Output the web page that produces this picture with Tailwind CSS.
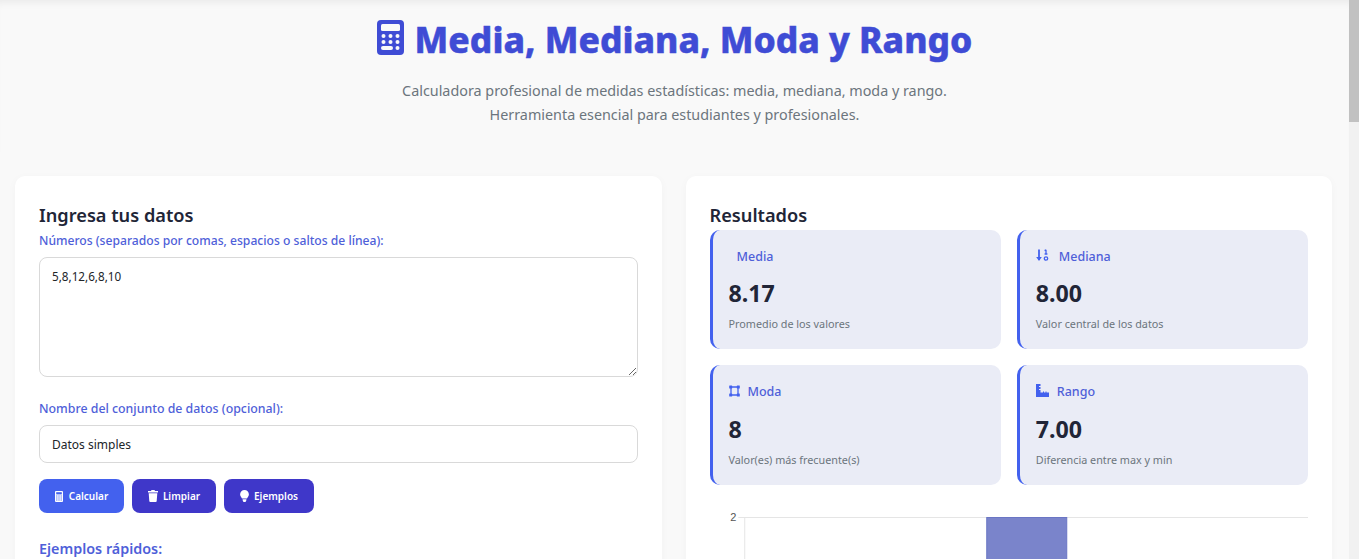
<!DOCTYPE html>
<html lang="es">
<head>
  <meta charset="UTF-8">
  <title>Media, Mediana, Moda y Rango</title>
  <script src="https://cdn.jsdelivr.net/npm/@tailwindcss/browser@4"></script>
</head>
<body class="h-screen overflow-hidden flex bg-[#f9f9f9] font-['Noto_Sans',sans-serif] text-[#212537]">
  <div class="flex-1 min-w-0 overflow-hidden">
    <header class="h-[152px] flex flex-col items-center shadow-[inset_0_8px_8px_-6px_rgba(0,0,0,0.07)]">
      <h1 class="mt-[14px] h-[50px] flex items-center gap-[11px] text-[35.4px] leading-[50px] font-extrabold text-[#3f4cd5] [-webkit-text-stroke:0.5px_#3f4cd5]">
        <svg class="w-[27px] h-[35px] -mt-[4px]" viewBox="0 0 27 35">
          <rect width="27" height="35" rx="4" fill="#3f4cd5"/>
          <rect x="4" y="4" width="19" height="7" rx="1.5" fill="#f9f9f9"/>
          <g fill="#f9f9f9">
            <circle cx="6.5" cy="16" r="2"/><circle cx="13.5" cy="16" r="2"/><circle cx="20.5" cy="16" r="2"/>
            <circle cx="6.5" cy="22" r="2"/><circle cx="13.5" cy="22" r="2"/><circle cx="20.5" cy="22" r="2"/>
            <rect x="4" y="26" width="12" height="4" rx="2"/><circle cx="20.5" cy="28" r="2"/>
          </g>
        </svg>
        Media, Mediana, Moda y Rango
      </h1>
      <p class="mt-[14.5px] text-[14.35px] leading-[24.5px] text-[#6c757d] text-center">Calculadora profesional de medidas estadísticas: media, mediana, moda y rango.<br>Herramienta esencial para estudiantes y profesionales.</p>
    </header>

    <main class="mt-[24px] mx-[15px] mr-[17px] grid grid-cols-2 gap-[24px] items-start">
      <section class="h-[500px] bg-white rounded-[10px] p-[24px] shadow-[0_2px_10px_rgba(0,0,0,0.03)]">
        <h2 class="mt-[2px] text-[18.2px] leading-[26px] font-semibold">Ingresa tus datos</h2>
        <label class="block mt-[4px] text-[12.13px] leading-[18px] font-medium text-[#4f5fd9]">Números (separados por comas, espacios o saltos de línea):</label>
        <textarea class="block mt-[7px] w-full h-[120px] border border-[#d9d9d9] rounded-[8px] px-[12px] py-[9px] text-[11.7px] leading-[18px] text-[#212529] bg-white">5,8,12,6,8,10</textarea>
        <label class="block mt-[23px] text-[12.35px] leading-[18px] font-medium text-[#4f5fd9]">Nombre del conjunto de datos (opcional):</label>
        <input class="block mt-[7px] w-full h-[38px] border border-[#d9d9d9] rounded-[8px] px-[12px] text-[12px] text-[#212529] bg-white" value="Datos simples">
        <div class="mt-[16px] flex gap-[8px]">
          <button class="h-[34px] w-[85px] rounded-[8px] bg-[#4361ee] text-white text-[10px] font-semibold flex items-center justify-center gap-[6px]">
            <svg class="w-[8px] h-[11px]" viewBox="0 0 8 11"><rect width="8" height="11" rx="1" fill="#fff"/><rect x="1.2" y="1.2" width="5.6" height="2.2" fill="#4361ee"/><g fill="#4361ee"><rect x="1.2" y="4.5" width="1.2" height="1"/><rect x="3.4" y="4.5" width="1.2" height="1"/><rect x="5.6" y="4.5" width="1.2" height="1"/><rect x="1.2" y="6.5" width="1.2" height="1"/><rect x="3.4" y="6.5" width="1.2" height="1"/><rect x="5.6" y="6.5" width="1.2" height="1"/><rect x="1.2" y="8.5" width="1.2" height="1"/><rect x="3.4" y="8.5" width="1.2" height="1"/><rect x="5.6" y="8.5" width="1.2" height="1"/></g></svg>
            Calcular
          </button>
          <button class="h-[34px] w-[84px] rounded-[8px] bg-[#3f37c9] text-white text-[10px] font-semibold flex items-center justify-center gap-[5px]">
            <svg class="w-[10px] h-[12px]" viewBox="0 0 10 12"><path fill="#fff" d="M3.5 0h3l.5 1h3v1.4H0V1h3zM.7 3.2h8.6L8.7 11a1 1 0 0 1-1 1H2.3a1 1 0 0 1-1-1z"/></svg>
            Limpiar
          </button>
          <button class="h-[34px] w-[90px] rounded-[8px] bg-[#3f37c9] text-white text-[10px] font-semibold flex items-center justify-center gap-[5px]">
            <svg class="w-[9px] h-[12px]" viewBox="0 0 9 12"><path fill="#fff" d="M4.5 0a4.4 4.4 0 0 1 4.4 4.4c0 1.6-1.2 2.6-1.9 4H2c-.7-1.4-1.9-2.4-1.9-4A4.4 4.4 0 0 1 4.5 0zM2.6 9.2h3.8v1L5.5 12h-2l-.9-1.8z"/></svg>
            Ejemplos
          </button>
        </div>
        <h3 class="mt-[26px] text-[14.35px] leading-[20px] font-semibold text-[#4f5fd9]">Ejemplos rápidos:</h3>
      </section>

      <section class="h-[500px] bg-white rounded-[10px] p-[24px] shadow-[0_2px_10px_rgba(0,0,0,0.03)]">
        <h2 class="mt-[2px] text-[18.2px] leading-[26px] font-semibold">Resultados</h2>
        <div class="mt-[2px] grid grid-cols-2 gap-[16px]">
          <div class="h-[119px] rounded-[10px] border-l-[3px] border-[#4361ee] bg-[#eaecf6] pl-[16px] pt-[17px]">
            <div class="pl-[8px] text-[12.5px] leading-[20px] font-medium text-[#4f5fd9]">Media</div>
            <div class="mt-[10px] text-[23.2px] leading-[32px] font-bold">8.17</div>
            <div class="mt-[7px] text-[10.8px] leading-[16px] text-[#6c757d]">Promedio de los valores</div>
          </div>
          <div class="h-[119px] rounded-[10px] border-l-[3px] border-[#4361ee] bg-[#eaecf6] pl-[16px] pt-[17px]">
            <div class="flex items-center gap-[10px] text-[12.5px] leading-[20px] font-medium text-[#4f5fd9]">
              <svg class="w-[13px] h-[13px] -mt-[4px]" viewBox="0 0 13 13" fill="none" stroke="#4361ee"><path stroke-width="1.8" d="M3 .5V11"/><path fill="#4361ee" stroke="none" d="M.2 8h5.6L3 12z"/><path stroke-width="1.3" d="M10 .8v4M8.6 1.6 10 .8M8.6 5h2.8"/><circle cx="10" cy="9.5" r="1.7" stroke-width="1.3"/></svg>
              Mediana
            </div>
            <div class="mt-[10px] text-[23.2px] leading-[32px] font-bold">8.00</div>
            <div class="mt-[7px] text-[10.8px] leading-[16px] text-[#6c757d]">Valor central de los datos</div>
          </div>
          <div class="h-[120px] rounded-[10px] border-l-[3px] border-[#4361ee] bg-[#eaecf6] pl-[16px] pt-[17px]">
            <div class="flex items-center gap-[8px] text-[12.5px] leading-[20px] font-medium text-[#4f5fd9]">
              <svg class="w-[11px] h-[12px] -mt-[3px]" viewBox="0 0 11 12" fill="none" stroke="#4361ee" stroke-width="1.3"><path d="M2 2h7M2 10h7M2 2v8M9 2v8"/><rect x=".2" y=".4" width="3" height="3" rx=".5" fill="#4361ee" stroke="none"/><rect x="7.8" y=".4" width="3" height="3" rx=".5" fill="#4361ee" stroke="none"/><rect x=".2" y="8.6" width="3" height="3" rx=".5" fill="#4361ee" stroke="none"/><rect x="7.8" y="8.6" width="3" height="3" rx=".5" fill="#4361ee" stroke="none"/></svg>
              Moda
            </div>
            <div class="mt-[11px] text-[23.2px] leading-[32px] font-bold">8</div>
            <div class="mt-[7px] text-[10.8px] leading-[16px] text-[#6c757d]">Valor(es) más frecuente(s)</div>
          </div>
          <div class="h-[120px] rounded-[10px] border-l-[3px] border-[#4361ee] bg-[#eaecf6] pl-[16px] pt-[17px]">
            <div class="flex items-center gap-[8px] text-[12.5px] leading-[20px] font-medium text-[#4f5fd9]">
              <svg class="w-[13px] h-[13px] -mt-[3px]" viewBox="0 0 13 13"><path fill="#4361ee" d="M0 0h4.5v2H3v1h1.5v2H3v1h1.5v2.5H7V7.5h1v1h1.5v-1h1v1H13V13H0z"/></svg>
              Rango
            </div>
            <div class="mt-[11px] text-[23.2px] leading-[32px] font-bold">7.00</div>
            <div class="mt-[7px] text-[10.8px] leading-[16px] text-[#6c757d]">Diferencia entre max y min</div>
          </div>
        </div>
        <svg class="mt-[20px] w-full h-[80px] block" viewBox="0 0 598 80" font-family="Liberation Sans" font-size="11" fill="#666">
          <text x="20" y="16" fill="#555">2</text>
          <path d="M28 12.5h570M34.5 12v68" stroke="#e5e5e5" fill="none"/>
          <rect x="276.5" y="12.5" width="80" height="70" fill="#7a84cb" stroke="#6a75c4"/>
        </svg>
      </section>
    </main>
  </div>
  <div class="w-[10px] shrink-0 bg-[#f1f1f1]">
    <div class="h-[122px] bg-[#c1c1c1]"></div>
  </div>
</body>
</html>
